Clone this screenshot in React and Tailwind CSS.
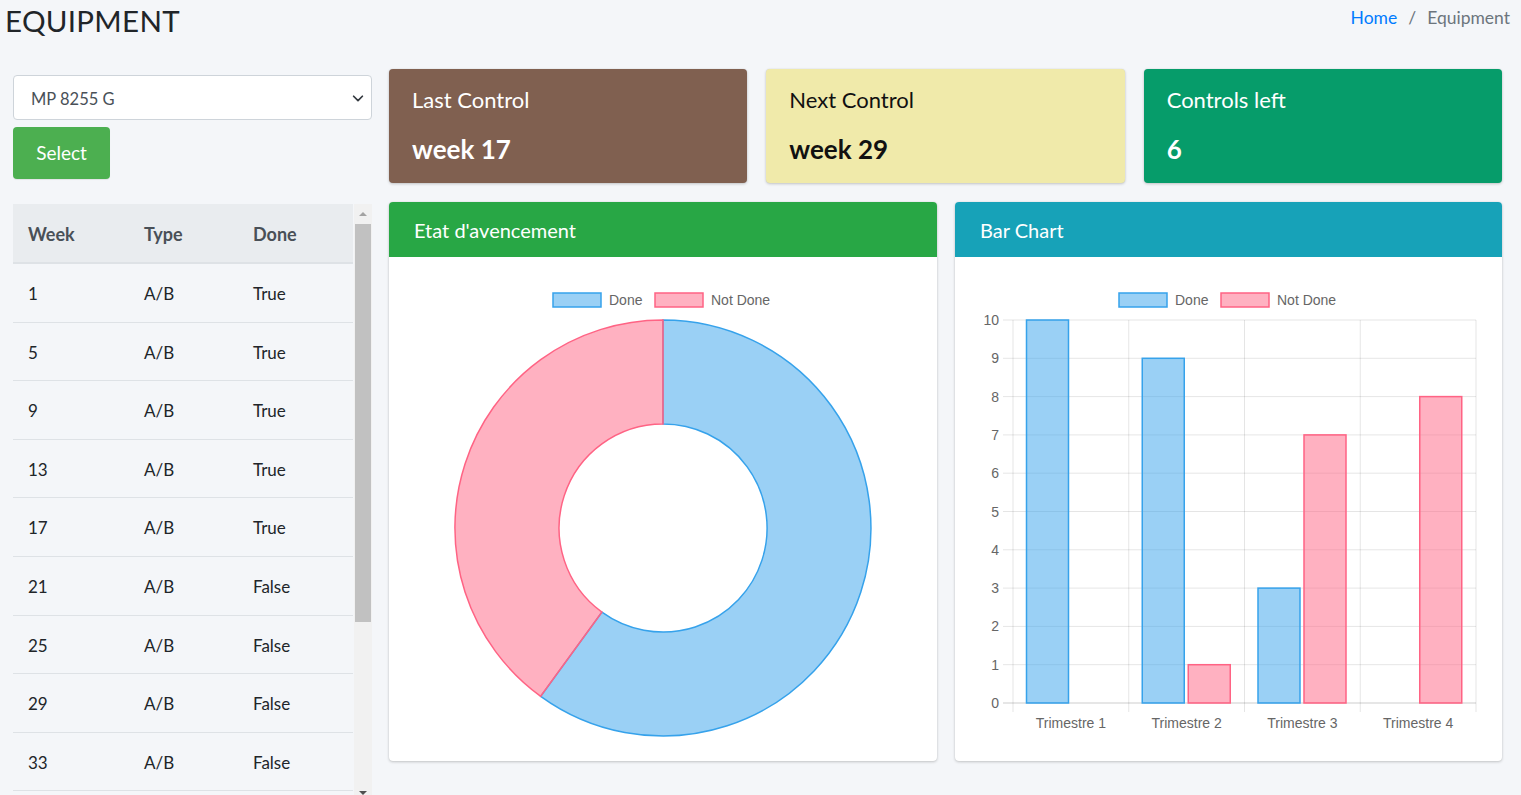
import React from "react";

const rows = [
  ["1", "A/B", "True"],
  ["5", "A/B", "True"],
  ["9", "A/B", "True"],
  ["13", "A/B", "True"],
  ["17", "A/B", "True"],
  ["21", "A/B", "False"],
  ["25", "A/B", "False"],
  ["29", "A/B", "False"],
  ["33", "A/B", "False"],
];

const BLUE_F = "rgba(54,162,235,0.5)";
const BLUE_S = "rgb(54,162,235)";
const PINK_F = "rgba(255,99,132,0.5)";
const PINK_S = "rgb(255,99,132)";

function Legend() {
  return (
    <g fontFamily="'Liberation Sans', Arial, sans-serif" fontSize="14" fill="#666">
      <rect x="164" y="36" width="48" height="14" fill={BLUE_F} stroke={BLUE_S} strokeWidth="1.5" />
      <text x="220" y="48">Done</text>
      <rect x="266" y="36" width="48" height="14" fill={PINK_F} stroke={PINK_S} strokeWidth="1.5" />
      <text x="322" y="48">Not Done</text>
    </g>
  );
}

function Donut() {
  return (
    <svg width="548" height="504" viewBox="0 0 548 504">
      <Legend />
      <path
        d="M 274 63 A 208 208 0 1 1 151.7 439.3 L 212.9 355.1 A 104 104 0 1 0 274 167 Z"
        fill={BLUE_F}
        stroke={BLUE_S}
        strokeWidth="1.5"
      />
      <path
        d="M 151.7 439.3 A 208 208 0 0 1 274 63 L 274 167 A 104 104 0 0 0 212.9 355.1 Z"
        fill={PINK_F}
        stroke={PINK_S}
        strokeWidth="1.5"
      />
    </svg>
  );
}

function Bars() {
  const left = 58;
  const cw = 115.75;
  const y0 = 446;
  const unit = 38.3;
  const done = [10, 9, 3, 0];
  const notDone = [0, 1, 7, 8];
  const ticks = [0, 1, 2, 3, 4, 5, 6, 7, 8, 9, 10];
  return (
    <svg width="547" height="504" viewBox="0 0 547 504">
      <Legend />
      <g strokeWidth="1">
        {ticks.map((t) => (
          <line key={t} x1="48" x2="521" y1={y0 - t * unit} y2={y0 - t * unit} stroke={t === 0 ? "rgba(0,0,0,0.2)" : "rgba(0,0,0,0.1)"} />
        ))}
        {[0, 1, 2, 3, 4].map((i) => (
          <line key={i} x1={left + i * cw} x2={left + i * cw} y1={63} y2={y0 + 9} stroke="rgba(0,0,0,0.1)" />
        ))}
      </g>
      <g fontFamily="'Liberation Sans', Arial, sans-serif" fontSize="14" fill="#666">
        {ticks.map((t) => (
          <text key={t} x="44" y={y0 - t * unit + 5} textAnchor="end">
            {t}
          </text>
        ))}
        {[1, 2, 3, 4].map((i) => (
          <text key={i} x={left + (i - 0.5) * cw} y="471" textAnchor="middle">
            {"Trimestre " + i}
          </text>
        ))}
      </g>
      {done.map((v, i) =>
        v > 0 ? (
          <rect key={"d" + i} x={left + i * cw + 13.5} y={y0 - v * unit} width="42" height={v * unit} fill={BLUE_F} stroke={BLUE_S} strokeWidth="1.5" />
        ) : null
      )}
      {notDone.map((v, i) =>
        v > 0 ? (
          <rect key={"n" + i} x={left + i * cw + 59.5} y={y0 - v * unit} width="42" height={v * unit} fill={PINK_F} stroke={PINK_S} strokeWidth="1.5" />
        ) : null
      )}
    </svg>
  );
}

function InfoCard({ bg, text, title, value }) {
  return (
    <div className={`w-[359px] h-[114px] rounded-[4px] shadow-[0_0_1px_rgba(0,0,0,0.125),0_1px_3px_rgba(0,0,0,0.2)] pl-[23px] pt-[16px] ${bg} ${text}`}>
      <div className="text-[22px] leading-[30px]">{title}</div>
      <div className="text-[26px] font-bold leading-[34px] mt-[17px]">{value}</div>
    </div>
  );
}

export default function App() {
  return (
    <div className="w-[1521px] h-[795px] overflow-hidden bg-[#f4f6f9] font-['Lato','Noto_Sans',sans-serif] text-[#212529]">
      <div className="h-[44px] flex items-start justify-between">
        <h1 className="pl-[5px] pt-[2px] text-[29.5px] leading-[38px] font-normal tracking-[0.3px]">EQUIPMENT</h1>
        <div className="pr-[11px] pt-[5px] text-[17.5px] leading-[26px] flex gap-[11px]">
          <span className="text-[#007bff]">Home</span>
          <span className="text-[#6c757d]">/</span>
          <span className="text-[#6c757d]">Equipment</span>
        </div>
      </div>
      <div className="flex pl-[13px] gap-[17px]">
        <div className="w-[359px] pt-[31px] flex flex-col">
          <div className="h-[45px] rounded-[4px] border border-[#ced4da] bg-white flex items-center justify-between pl-[17px] pr-[6px] pt-[4px] text-[16.5px] text-[#495057]">
            <span>MP 8255 G</span>
            <svg width="14" height="14" viewBox="0 0 16 16" className="-mt-[4px]">
              <path d="M3 6 L8 11 L13 6" fill="none" stroke="#343a40" strokeWidth="2" strokeLinecap="round" strokeLinejoin="round" />
            </svg>
          </div>
          <button className="mt-[7px] w-[97px] h-[52px] rounded-[4px] bg-[#4caf50] text-white text-[19px] shadow-[0_1px_1px_rgba(0,0,0,0.075)]">
            Select
          </button>
          <div className="mt-[25px] h-[591px] flex overflow-hidden">
            <div className="w-[340px]">
              <div className="h-[60px] bg-[#e9ecef] border-b-2 border-[#dee2e6] flex items-center pt-[2px] text-[18px] font-bold text-[#495057]">
                <span className="w-[131px] pl-[15px]">Week</span>
                <span className="w-[109px]">Type</span>
                <span>Done</span>
              </div>
              {rows.map((r) => (
                <div key={r[0]} className="h-[58.6px] border-b border-[#dee2e6] flex items-center pt-[2px] text-[17px] text-[#212529]">
                  <span className="w-[131px] pl-[15px]">{r[0]}</span>
                  <span className="w-[109px]">{r[1]}</span>
                  <span>{r[2]}</span>
                </div>
              ))}
            </div>
            <div className="w-[18px] ml-px bg-[#f1f1f1] flex flex-col items-center">
              <div className="h-[20px] flex items-center justify-center">
                <div className="w-0 h-0 border-l-[4px] border-r-[4px] border-b-[4px] border-l-transparent border-r-transparent border-b-[#a3a3a3]" />
              </div>
              <div className="w-[16px] h-[398px] bg-[#c1c1c1]" />
              <div className="flex-1" />
              <div className="h-[10px] flex items-end justify-center">
                <div className="w-0 h-0 border-l-[4px] border-r-[4px] border-t-[4px] border-l-transparent border-r-transparent border-t-[#505050]" />
              </div>
            </div>
          </div>
        </div>
        <div className="w-[1113px] pt-[25px]">
          <div className="flex gap-[19px]">
            <InfoCard bg="bg-[#806050]" text="text-white" title="Last Control" value="week 17" />
            <InfoCard bg="bg-[#f0eaaa]" text="text-[#111]" title="Next Control" value="week 29" />
            <InfoCard bg="bg-[#069c6a]" text="text-white" title="Controls left" value="6" />
          </div>
          <div className="flex gap-[18px] mt-[19px]">
            <div className="w-[548px] h-[559px] rounded-[4px] bg-white shadow-[0_0_1px_rgba(0,0,0,0.125),0_1px_3px_rgba(0,0,0,0.2)] overflow-hidden">
              <div className="h-[55px] bg-[#28a745] text-white text-[20px] flex items-center pl-[25px]">Etat d'avencement</div>
              <Donut />
            </div>
            <div className="w-[547px] h-[559px] rounded-[4px] bg-white shadow-[0_0_1px_rgba(0,0,0,0.125),0_1px_3px_rgba(0,0,0,0.2)] overflow-hidden">
              <div className="h-[55px] bg-[#17a2b8] text-white text-[20px] flex items-center pl-[25px]">Bar Chart</div>
              <Bars />
            </div>
          </div>
        </div>
      </div>
    </div>
  );
}
